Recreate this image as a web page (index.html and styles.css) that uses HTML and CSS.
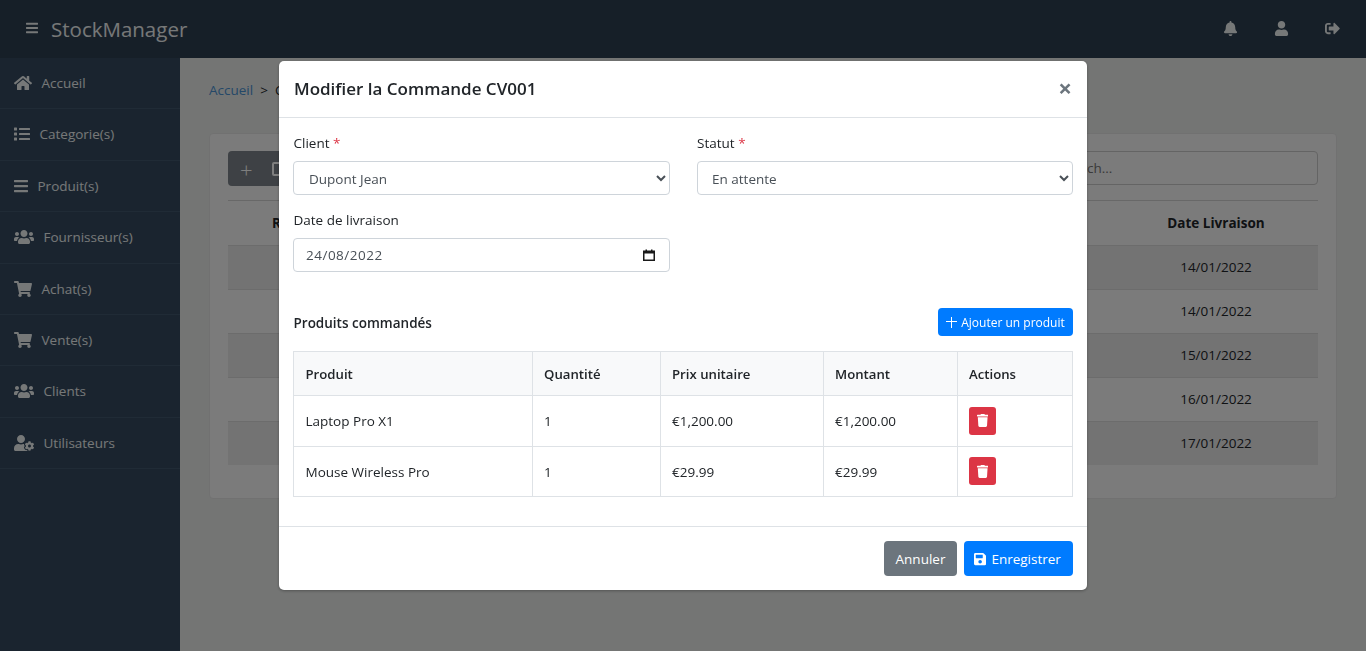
FILE: index.html
```html
<!DOCTYPE html>
<html lang="fr">
<head>
  <meta charset="UTF-8">
  <meta name="viewport" content="width=device-width, initial-scale=1.0">
  <title>Commandes - StockManager</title>
  <link rel="stylesheet" href="styles.css">
</head>
<body>
  <svg class="sprite" xmlns="http://www.w3.org/2000/svg">
    <defs>
      <path id="i-bars" d="M16 132h416c8.837 0 16-7.163 16-16V76c0-8.837-7.163-16-16-16H16C7.163 60 0 67.163 0 76v40c0 8.837 7.163 16 16 16zm0 160h416c8.837 0 16-7.163 16-16v-40c0-8.837-7.163-16-16-16H16c-8.837 0-16 7.163-16 16v40c0 8.837 7.163 16 16 16zm0 160h416c8.837 0 16-7.163 16-16v-40c0-8.837-7.163-16-16-16H16c-8.837 0-16 7.163-16 16v40c0 8.837 7.163 16 16 16z"/>
      <path id="i-home" d="M280.37 148.26L96 300.11V464a16 16 0 0 0 16 16l112.06-.29a16 16 0 0 0 15.92-16V368a16 16 0 0 1 16-16h64a16 16 0 0 1 16 16v95.64a16 16 0 0 0 16 16.05L464 480a16 16 0 0 0 16-16V300L295.67 148.26a12.19 12.19 0 0 0-15.3 0zM571.6 251.47L488 182.56V44.05a12 12 0 0 0-12-12h-56a12 12 0 0 0-12 12v72.61L318.47 43a48 48 0 0 0-61 0L4.34 251.47a12 12 0 0 0-1.6 16.9l25.5 31A12 12 0 0 0 45.15 301l235.22-193.74a12.19 12.19 0 0 1 15.3 0L530.9 301a12 12 0 0 0 16.9-1.6l25.5-31a12 12 0 0 0-1.7-16.93z"/>
      <path id="i-list" d="M80 368H16a16 16 0 0 0-16 16v64a16 16 0 0 0 16 16h64a16 16 0 0 0 16-16v-64a16 16 0 0 0-16-16zm0-320H16A16 16 0 0 0 0 64v64a16 16 0 0 0 16 16h64a16 16 0 0 0 16-16V64a16 16 0 0 0-16-16zm0 160H16a16 16 0 0 0-16 16v64a16 16 0 0 0 16 16h64a16 16 0 0 0 16-16v-64a16 16 0 0 0-16-16zm416 176H176a16 16 0 0 0-16 16v32a16 16 0 0 0 16 16h320a16 16 0 0 0 16-16v-32a16 16 0 0 0-16-16zm0-320H176a16 16 0 0 0-16 16v32a16 16 0 0 0 16 16h320a16 16 0 0 0 16-16V80a16 16 0 0 0-16-16zm0 160H176a16 16 0 0 0-16 16v32a16 16 0 0 0 16 16h320a16 16 0 0 0 16-16v-32a16 16 0 0 0-16-16z"/>
      <path id="i-users" d="M96 224c35.3 0 64-28.7 64-64s-28.7-64-64-64-64 28.7-64 64 28.7 64 64 64zm448 0c35.3 0 64-28.7 64-64s-28.7-64-64-64-64 28.7-64 64 28.7 64 64 64zm32 32h-64c-17.6 0-33.5 7.1-45.1 18.6 40.3 22.1 68.9 62 75.1 109.4h66c17.7 0 32-14.3 32-32v-32c0-35.3-28.7-64-64-64zm-256 0c61.9 0 112-50.1 112-112S381.9 32 320 32 208 82.1 208 144s50.1 112 112 112zm76.8 32h-8.3c-20.8 10-43.9 16-68.5 16s-47.6-6-68.5-16h-8.3C179.6 288 128 339.6 128 403.2V432c0 26.5 21.5 48 48 48h288c26.5 0 48-21.5 48-48v-28.8c0-63.6-51.6-115.2-115.2-115.2zm-223.7-13.4C161.5 263.1 145.6 256 128 256H64c-35.3 0-64 28.7-64 64v32c0 17.7 14.3 32 32 32h65.9c6.3-47.4 34.9-87.3 75.2-109.4z"/>
      <path id="i-cart" d="M528.12 301.319l47.273-208C578.806 78.301 567.391 64 551.99 64H159.208l-9.166-44.81C147.758 8.021 137.93 0 126.529 0H24C10.745 0 0 10.745 0 24v16c0 13.255 10.745 24 24 24h69.883l70.248 343.435C147.325 417.1 136 435.222 136 456c0 30.928 25.072 56 56 56s56-25.072 56-56c0-15.674-6.447-29.835-16.824-40h209.647C430.447 426.165 424 440.326 424 456c0 30.928 25.072 56 56 56s56-25.072 56-56c0-22.172-12.888-41.332-31.579-50.405l5.517-24.276c3.413-15.018-8.002-29.319-23.403-29.319H218.117l-6.545-32h293.145c11.206 0 20.92-7.754 23.403-18.681z"/>
      <path id="i-user-cog" d="M610.5 373.3c2.6-14.1 2.6-28.5 0-42.6l25.8-14.9c3-1.7 4.3-5.2 3.3-8.5-6.7-21.6-18.2-41.2-33.2-57.4-2.3-2.5-6-3.1-9-1.4l-25.8 14.9c-10.9-9.3-23.4-16.5-36.9-21.3v-29.8c0-3.4-2.4-6.4-5.7-7.1-22.3-5-45-4.8-66.2 0-3.3.7-5.7 3.7-5.7 7.1v29.8c-13.5 4.8-26 12-36.9 21.3l-25.8-14.9c-2.9-1.7-6.7-1.1-9 1.4-15 16.2-26.5 35.8-33.2 57.4-1 3.3.4 6.8 3.3 8.5l25.8 14.9c-2.6 14.1-2.6 28.5 0 42.6l-25.8 14.9c-3 1.7-4.3 5.2-3.3 8.5 6.7 21.6 18.2 41.1 33.2 57.4 2.3 2.5 6 3.1 9 1.4l25.8-14.9c10.9 9.3 23.4 16.5 36.9 21.3v29.8c0 3.4 2.4 6.4 5.7 7.1 22.3 5 45 4.8 66.2 0 3.3-.7 5.7-3.7 5.7-7.1v-29.8c13.5-4.8 26-12 36.9-21.3l25.8 14.9c2.9 1.7 6.7 1.1 9-1.4 15-16.2 26.5-35.8 33.2-57.4 1-3.3-.4-6.8-3.3-8.5l-25.8-14.9zM496 400.5c-26.8 0-48.5-21.8-48.5-48.5s21.8-48.5 48.5-48.5 48.5 21.8 48.5 48.5-21.7 48.5-48.5 48.5zM224 256c70.7 0 128-57.3 128-128S294.7 0 224 0 96 57.3 96 128s57.3 128 128 128zm201.2 226.5c-2.3-1.2-4.6-2.6-6.8-3.9l-7.9 4.6c-6 3.4-12.8 5.3-19.6 5.3-10.9 0-21.4-4.6-28.9-12.6-18.3-19.8-32.3-43.9-40.2-69.6-5.5-17.7 1.9-36.4 17.9-45.7l7.9-4.6c-.1-2.6-.1-5.2 0-7.8l-7.9-4.6c-16-9.2-23.4-28-17.9-45.7.9-2.9 2.2-5.8 3.2-8.7-3.8-.3-7.5-1.2-11.4-1.2h-16.7c-22.2 10.2-46.9 16-72.9 16s-50.6-5.8-72.9-16h-16.7C60.2 288 0 348.2 0 422.4V464c0 26.5 21.5 48 48 48h352c10.1 0 19.5-3.2 27.2-8.5-1.2-3.8-2-7.7-2-11.8v-9.2z"/>
      <path id="i-bell" d="M224 512c35.32 0 63.97-28.65 63.97-64H160.03c0 35.35 28.65 64 63.97 64zm215.39-149.71c-19.32-20.76-55.47-51.99-55.47-154.29 0-77.7-54.48-139.9-127.94-155.16V32c0-17.67-14.32-32-31.98-32s-31.98 14.33-31.98 32v20.84C118.56 68.1 64.08 130.3 64.08 208c0 102.3-36.15 133.53-55.47 154.29-6 6.45-8.66 14.16-8.61 21.71.11 16.4 12.98 32 32.1 32h383.8c19.12 0 32-15.6 32.1-32 .05-7.55-2.61-15.27-8.61-21.71z"/>
      <path id="i-user" d="M224 256c70.7 0 128-57.3 128-128S294.7 0 224 0 96 57.3 96 128s57.3 128 128 128zm89.6 32h-16.7c-22.2 10.2-46.9 16-72.9 16s-50.6-5.8-72.9-16h-16.7C60.2 288 0 348.2 0 422.4V464c0 26.5 21.5 48 48 48h352c26.5 0 48-21.5 48-48v-41.6c0-74.2-60.2-134.4-134.4-134.4z"/>
      <path id="i-signout" d="M497 273L329 441c-15 15-41 4.5-41-17v-96H152c-13.3 0-24-10.7-24-24v-96c0-13.3 10.7-24 24-24h136V88c0-21.4 25.9-32 41-17l168 168c9.3 9.4 9.3 24.6 0 34zM192 436v-40c0-6.6-5.4-12-12-12H96c-17.7 0-32-14.3-32-32V160c0-17.7 14.3-32 32-32h84c6.6 0 12-5.4 12-12V76c0-6.6-5.4-12-12-12H96c-53 0-96 43-96 96v192c0 53 43 96 96 96h84c6.6 0 12-5.4 12-12z"/>
      <path id="i-trash" d="M432 32H312l-9.4-18.7A24 24 0 0 0 281.1 0H166.8a23.72 23.72 0 0 0-21.4 13.3L136 32H16A16 16 0 0 0 0 48v32a16 16 0 0 0 16 16h416a16 16 0 0 0 16-16V48a16 16 0 0 0-16-16zM53.2 467a48 48 0 0 0 47.9 45h245.8a48 48 0 0 0 47.9-45L416 128H32z"/>
      <path id="i-save" d="M433.941 129.941l-83.882-83.882A48 48 0 0 0 316.118 32H48C21.49 32 0 53.49 0 80v352c0 26.51 21.49 48 48 48h352c26.51 0 48-21.49 48-48V163.882a48 48 0 0 0-14.059-33.941zM224 416c-35.346 0-64-28.654-64-64 0-35.346 28.654-64 64-64s64 28.654 64 64c0 35.346-28.654 64-64 64zm96-304.52V212c0 6.627-5.373 12-12 12H76c-6.627 0-12-5.373-12-12V108c0-6.627 5.373-12 12-12h228.52c3.183 0 6.235 1.264 8.485 3.515l3.48 3.48A11.996 11.996 0 0 1 320 111.48z"/>
    </defs>
  </svg>

  <header class="topbar">
    <div class="brand">
      <svg class="icon-bars" viewBox="0 0 448 512"><use href="#i-bars"/></svg>
      <span class="brand-name">StockManager</span>
    </div>
    <div class="top-actions">
      <svg class="top-icon" viewBox="0 0 448 512"><use href="#i-bell"/></svg>
      <svg class="top-icon" viewBox="0 0 448 512"><use href="#i-user"/></svg>
      <svg class="top-icon" viewBox="0 0 512 512"><use href="#i-signout"/></svg>
    </div>
  </header>

  <div class="layout">
    <nav class="sidebar">
      <a class="nav-item"><svg viewBox="0 0 576 512"><use href="#i-home"/></svg>Accueil</a>
      <a class="nav-item"><svg viewBox="0 0 512 512"><use href="#i-list"/></svg>Categorie(s)</a>
      <a class="nav-item"><svg viewBox="0 0 448 512"><use href="#i-bars"/></svg>Produit(s)</a>
      <a class="nav-item"><svg viewBox="0 0 640 512"><use href="#i-users"/></svg>Fournisseur(s)</a>
      <a class="nav-item"><svg viewBox="0 0 576 512"><use href="#i-cart"/></svg>Achat(s)</a>
      <a class="nav-item"><svg viewBox="0 0 576 512"><use href="#i-cart"/></svg>Vente(s)</a>
      <a class="nav-item"><svg viewBox="0 0 640 512"><use href="#i-users"/></svg>Clients</a>
      <a class="nav-item"><svg viewBox="0 0 640 512"><use href="#i-user-cog"/></svg>Utilisateurs</a>
    </nav>

    <main class="content">
      <div class="breadcrumb"><a>Accueil</a><span class="crumb-sep">&gt;</span><span class="crumb-current">Commandes</span></div>
      <section class="card">
        <div class="toolbar">
          <div class="btn-group">
            <span class="tool-plus">+</span>
            <span class="tool-box"></span>
          </div>
          <input class="search" type="text" placeholder="Search...">
        </div>
        <table class="orders">
          <thead>
            <tr><th class="col-ref">Référence</th><th>Client</th><th class="col-date">Date Livraison</th></tr>
          </thead>
          <tbody>
            <tr><td></td><td></td><td>14/01/2022</td></tr>
            <tr><td></td><td></td><td>14/01/2022</td></tr>
            <tr><td></td><td></td><td>15/01/2022</td></tr>
            <tr><td></td><td></td><td>16/01/2022</td></tr>
            <tr><td></td><td></td><td>17/01/2022</td></tr>
          </tbody>
        </table>
      </section>
    </main>
  </div>

  <div class="backdrop">
    <div class="modal">
      <div class="modal-header">
        <h5 class="modal-title">Modifier la Commande CV001</h5>
        <span class="close">&times;</span>
      </div>

      <div class="modal-body">
        <div class="form-grid">
          <div class="field">
            <label>Client <span class="req">*</span></label>
            <select class="form-control">
              <option>Dupont Jean</option>
            </select>
          </div>
          <div class="field field-status">
            <label>Statut <span class="req">*</span></label>
            <select class="form-control">
              <option>En attente</option>
            </select>
          </div>
          <div class="field">
            <label>Date de livraison</label>
            <div class="form-control date-control">
              <span>24/08/2022</span>
              <svg class="calendar" viewBox="0 0 12 12">
                <path d="M.75 2.25h10.5v9H.75z" fill="none" stroke="#1a1a1a" stroke-width="1.5"/>
                <path d="M1 2h10v2.5H1zM2.5 .5h1.5V2H2.5zM8 .5h1.5V2H8z" fill="#1a1a1a"/>
              </svg>
            </div>
          </div>
        </div>

        <div class="products-head">
          <strong>Produits commandés</strong>
          <button class="btn btn-primary btn-sm"><span class="plus"></span>Ajouter un produit</button>
        </div>

        <table class="products">
          <thead>
            <tr>
              <th class="c1">Produit</th>
              <th class="c2">Quantité</th>
              <th class="c3">Prix unitaire</th>
              <th class="c4">Montant</th>
              <th>Actions</th>
            </tr>
          </thead>
          <tbody>
            <tr>
              <td>Laptop Pro X1</td><td>1</td><td>€1,200.00</td><td>€1,200.00</td>
              <td><button class="btn-delete"><svg viewBox="0 0 448 512"><use href="#i-trash"/></svg></button></td>
            </tr>
            <tr>
              <td>Mouse Wireless Pro</td><td>1</td><td>€29.99</td><td>€29.99</td>
              <td><button class="btn-delete"><svg viewBox="0 0 448 512"><use href="#i-trash"/></svg></button></td>
            </tr>
          </tbody>
        </table>
      </div>

      <div class="modal-footer">
        <button class="btn btn-secondary">Annuler</button>
        <button class="btn btn-primary"><svg viewBox="0 0 448 512"><use href="#i-save"/></svg>Enregistrer</button>
      </div>
    </div>
  </div>
</body>
</html>
```

FILE: styles.css
```css
* {
  box-sizing: border-box;
}

html, body {
  height: 100%;
}

body {
  margin: 0;
  font-family: "Open Sans", "Noto Sans", sans-serif;
  font-size: 13.5px;
  color: #212529;
  background-color: #e8ebe9;
  overflow: hidden;
}

.sprite {
  display: none;
}

/* top bar */
.topbar {
  height: 58px;
  background-color: #2c3e50;
  display: flex;
  align-items: center;
  justify-content: space-between;
  padding: 0 26px;
  color: #ecf0f1;
}

.brand {
  display: flex;
  align-items: center;
  gap: 13px;
}

.icon-bars {
  width: 12px;
  height: 14px;
  fill: #ecf0f1;
  margin-bottom: 3px;
}

.brand-name {
  font-size: 20.5px;
}

.top-actions {
  display: flex;
  gap: 36px;
  margin-bottom: 1px;
}

.top-icon {
  height: 15px;
  width: 15px;
  fill: #ecf0f1;
}

/* sidebar */
.layout {
  display: flex;
  height: calc(100% - 58px);
}

.sidebar {
  width: 180px;
  background-color: #34495e;
  flex-shrink: 0;
}

.nav-item {
  display: flex;
  align-items: center;
  gap: 9.5px;
  height: 51.4px;
  padding-left: 14px;
  padding-bottom: 0.4px;
  color: #ecf0f1;
  border-bottom: 1px solid #40566c;
}

.nav-item svg {
  height: 16px;
  fill: #ecf0f1;
}

/* page behind the dialog */
.content {
  flex: 1;
  padding: 23px 29px 0;
}

.breadcrumb {
  height: 17px;
  display: flex;
  align-items: center;
  gap: 7px;
  margin-bottom: 35px;
}

.breadcrumb a {
  color: #4a90d0;
}

.crumb-current {
  color: #212529;
}

.card {
  background-color: #f7f7f7;
  border: 1px solid #e2e2e2;
  border-radius: 4px;
  height: 366px;
  padding: 17px 18px;
}

.toolbar {
  display: flex;
  justify-content: space-between;
  height: 50px;
  border-bottom: 1px solid #d0d0d0;
}

.btn-group {
  width: 120px;
  height: 35px;
  background-color: #7c838a;
  border-radius: 4px;
  display: flex;
  align-items: center;
  gap: 19px;
  padding-left: 12px;
  color: #fff;
}

.tool-plus {
  font-size: 22px;
  font-weight: 300;
}

.tool-box {
  width: 12px;
  height: 14px;
  border: 2px solid #fff;
  border-radius: 2px;
}

.search {
  width: 272px;
  height: 34px;
  padding: 0 12px;
  font: inherit;
  background-color: #f7f7f7;
  border: 1px solid #c8c8c8;
  border-radius: 4px;
}

.orders {
  width: 100%;
  border-collapse: collapse;
  table-layout: fixed;
}

.orders th {
  height: 44px;
  font-weight: 700;
  text-align: center;
}

.orders td {
  height: 44px;
  text-align: center;
}

.orders .col-ref {
  width: 156px;
}

.orders .col-date {
  width: 204px;
}

.orders tbody tr:nth-child(odd) {
  background-color: #e6e6e6;
}

.orders tbody tr {
  border-top: 1px solid #d8d8d8;
}

/* dialog */
.backdrop {
  position: fixed;
  inset: 0;
  background-color: rgba(0, 0, 0, 0.5);
  display: flex;
  justify-content: center;
  align-items: flex-start;
  padding-top: 61px;
}

.modal {
  width: 808px;
  background-color: #fff;
  border-radius: 5px;
  box-shadow: 0 1px 3px rgba(0, 0, 0, 0.3);
}

.modal-header {
  height: 57px;
  display: flex;
  align-items: center;
  justify-content: space-between;
  padding: 0 15px 2px;
  border-bottom: 1px solid #dee2e6;
}

.modal-title {
  margin: 0;
  font-size: 17px;
  font-weight: 600;
  color: #212529;
}

.close {
  font-size: 24px;
  font-weight: 700;
  line-height: 1;
  color: #6c757d;
}

.modal-body {
  padding: 15px 14px 29px;
}

.form-grid {
  display: grid;
  grid-template-columns: 377px 376px;
  justify-content: space-between;
  row-gap: 15px;
  margin-bottom: 36px;
}

.field label {
  display: block;
  height: 20px;
  line-height: 20px;
  margin-bottom: 8px;
  padding-left: 0.5px;
}

.req {
  color: #dc3545;
}

.form-control {
  width: 100%;
  height: 34px;
  padding: 0 12px;
  font: inherit;
  color: #495057;
  background-color: #fff;
  border: 1px solid #ced4da;
  border-radius: 4px;
}

select.form-control {
  padding: 2px 11px 0;
}

.field-status label {
  padding-left: 0;
}

.field-status select.form-control {
  padding-left: 10px;
}

.date-control {
  display: flex;
  align-items: center;
  justify-content: space-between;
  letter-spacing: 0.5px;
}

.calendar {
  width: 12px;
  height: 12px;
  margin-right: 2px;
}

.products-head {
  display: flex;
  align-items: center;
  justify-content: space-between;
  margin-bottom: 15px;
  padding-left: 0.5px;
}

.products-head strong {
  font-weight: 600;
  padding-top: 2px;
}

.btn {
  display: inline-flex;
  align-items: center;
  justify-content: center;
  border: none;
  border-radius: 4px;
  font: inherit;
  color: #fff;
  font-weight: 500;
}

.btn svg {
  height: 14px;
  fill: #fff;
  margin-right: 5px;
}

.btn-primary {
  background-color: #007bff;
  width: 109px;
  height: 35px;
  padding: 0 7px 0 5px;
}

.btn-secondary {
  background-color: #6c757d;
  width: 73px;
  height: 35px;
}

.btn-sm {
  width: 135px;
  height: 28px;
  font-size: 12px;
  padding: 0;
}

/* thin plus drawn with two bars */
.plus {
  width: 11px;
  height: 11px;
  margin-right: 4px;
  background:
    linear-gradient(#fff, #fff) center / 100% 1.4px no-repeat,
    linear-gradient(#fff, #fff) center / 1.4px 100% no-repeat;
}

.products {
  width: 100%;
  border-collapse: collapse;
  table-layout: fixed;
}

.products th, .products td {
  border: 1px solid #dee2e6;
  padding: 0 11px;
  text-align: left;
}

.products th {
  height: 44px;
  font-size: 13.2px;
  font-weight: 600;
  background-color: #f8f9fa;
}

.products td {
  height: 50.5px;
}

.products tbody tr:last-child td:not(:last-child) {
  padding-top: 1px;
}

.products td:first-child, .products th:first-child {
  padding-left: 11.5px;
}

.products .c1 {
  width: 239px;
}

.products .c2 {
  width: 128px;
}

.products .c3 {
  width: 163px;
}

.products .c4 {
  width: 134px;
}

.btn-delete {
  width: 27px;
  height: 28px;
  padding: 0;
  background-color: #dc3545;
  border: none;
  border-radius: 3px;
  display: flex;
  align-items: center;
  justify-content: center;
}

.btn-delete svg {
  height: 13px;
  fill: #fff;
}

.modal-footer {
  height: 64px;
  display: flex;
  align-items: center;
  justify-content: flex-end;
  gap: 7px;
  padding: 0 14px;
  border-top: 1px solid #dee2e6;
}
```
